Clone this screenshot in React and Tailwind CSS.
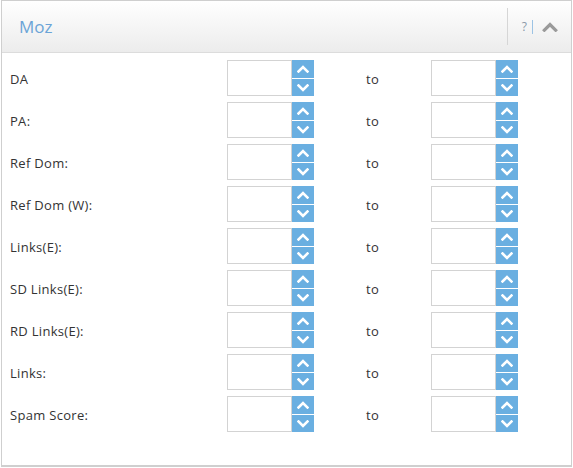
import React from "react";

const rows = [
  "DA",
  "PA:",
  "Ref Dom:",
  "Ref Dom (W):",
  "Links(E):",
  "SD Links(E):",
  "RD Links(E):",
  "Links:",
  "Spam Score:",
];

function Chevron({ up, className }) {
  return (
    <svg viewBox="0 0 12 8" className={className} fill="none">
      <path
        d={up ? "M1.5 6.5 L6 2 L10.5 6.5" : "M1.5 1.5 L6 6 L10.5 1.5"}
        stroke="currentColor"
        strokeWidth="2.6"
        strokeLinecap="square"
      />
    </svg>
  );
}

function NumberBox() {
  return (
    <div className="flex h-[36px] w-[87px]">
      <input
        type="text"
        className="h-full w-[65px] border border-[#d3d3d3] bg-white outline-none"
      />
      <div className="flex w-[22px] flex-col gap-px">
        <button className="flex h-[18px] items-center justify-center bg-[#6aafe1] text-white">
          <Chevron up className="h-[8px] w-[12px]" />
        </button>
        <button className="flex h-[17px] items-center justify-center bg-[#6aafe1] text-white">
          <Chevron className="h-[8px] w-[12px]" />
        </button>
      </div>
    </div>
  );
}

export default function App() {
  return (
    <div
      className="h-[468px] w-[573px] bg-white pl-px"
      style={{ fontFamily: '"Open Sans", "Liberation Sans", sans-serif' }}
    >
      <div className="flex h-[467px] w-[571px] flex-col border border-b-2 border-[#cfcfcf]">
        {/* header */}
        <div className="flex h-[52px] items-center border-b border-[#dcdcdc] bg-gradient-to-b from-white to-[#ececec]">
          <h3 className="pl-[17px] text-[17px] text-[#6ba4d7]">Moz</h3>
          <div className="ml-auto flex h-[37px] items-center border-l border-[#d6d6d6] pl-[14px] pr-[13px]">
            <span className="text-[12px] text-[#8a9aa8]">?</span>
            <span className="ml-[5px] h-[14px] w-px bg-[#9cc3e4]"></span>
            <Chevron up className="ml-[9px] h-[10px] w-[16px] text-[#9a9a9a]" />
          </div>
        </div>

        {/* body */}
        <div className="flex flex-col gap-[6px] pl-[7px] pt-[7px]">
          {rows.map((label) => (
            <div
              key={label}
              className="grid grid-cols-[218px_87px_117px_87px] items-center text-[13px] tracking-[0.3px] text-[#333]"
            >
              <span className="pl-px pt-[4px]">{label}</span>
              <NumberBox />
              <span className="pt-[4px] text-center">to</span>
              <NumberBox />
            </div>
          ))}
        </div>
      </div>
    </div>
  );
}
